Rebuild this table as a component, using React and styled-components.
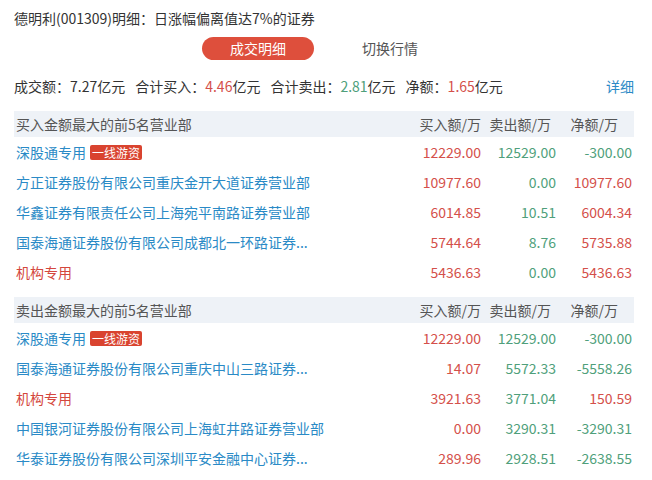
import React from "react";
import styled, { createGlobalStyle } from "styled-components";

const Global = createGlobalStyle`
  html, body { margin: 0; padding: 0; background: #fff; }
  body { font-family: "Noto Sans CJK SC", "Noto Sans", sans-serif; color: #333; }
`;

const Page = styled.div`
  width: 620px;
  padding: 8px 18px 0 14px;
  font-size: 14px;
`;

const Title = styled.div`
  line-height: 20px;
  color: #333;
`;

const Tabs = styled.div`
  display: flex;
  justify-content: center;
  gap: 20px;
  margin-top: 9px;
`;

const Tab = styled.div`
  width: 112px;
  height: 23px;
  line-height: 23px;
  text-align: center;
  border-radius: 12px;
  background: ${(p) => (p.$active ? "#de4f3c" : "transparent")};
  color: ${(p) => (p.$active ? "#fff" : "#555")};
`;

const Summary = styled.div`
  display: flex;
  align-items: center;
  margin-top: 16px;
  line-height: 20px;
`;

const Stat = styled.span`
  margin-right: 10px;
  color: #333;
`;

const Num = styled.span`
  color: ${(p) => p.$c || "#333"};
`;

const More = styled.span`
  margin-left: auto;
  color: #2a8ac6;
`;

const Section = styled.div`
  margin-top: ${(p) => p.$mt}px;
`;

const Grid = styled.div`
  display: grid;
  grid-template-columns: 1fr 75px 75px 76px 2px;
  align-items: center;
`;

const HeadRow = styled(Grid)`
  height: 26px;
  background: #eef2f7;
  color: #555;
`;

const HeadCell = styled.div`
  text-align: ${(p) => (p.$left ? "left" : "right")};
  padding-right: ${(p) => p.$pr || 0}px;
  padding-left: ${(p) => (p.$left ? 2 : 0)}px;
  white-space: nowrap;
`;

const Row = styled(Grid)`
  height: 30px;
`;

const NameCell = styled.div`
  display: flex;
  align-items: center;
  gap: 4px;
  padding-left: 2px;
  color: ${(p) => (p.$org ? "#d4473d" : "#2a8ac6")};
  white-space: nowrap;
  overflow: hidden;
`;

const Badge = styled.span`
  background: #d9432f;
  color: #fff;
  font-size: 12px;
  line-height: 15px;
  padding: 0 2px;
  border-radius: 2px;
`;

const Cell = styled.div`
  text-align: right;
  color: ${(p) => p.$c};
  white-space: nowrap;
`;

const RED = "#d4504a";
const GREEN = "#4f9f7b";
const col = (v) => (v.startsWith("-") ? GREEN : RED);

const buyRows = [
  { name: "深股通专用", badge: true, b: "12229.00", s: "12529.00", n: "-300.00" },
  { name: "方正证券股份有限公司重庆金开大道证券营业部", b: "10977.60", s: "0.00", n: "10977.60" },
  { name: "华鑫证券有限责任公司上海宛平南路证券营业部", b: "6014.85", s: "10.51", n: "6004.34" },
  { name: "国泰海通证券股份有限公司成都北一环路证券...", b: "5744.64", s: "8.76", n: "5735.88" },
  { name: "机构专用", org: true, b: "5436.63", s: "0.00", n: "5436.63" },
];

const sellRows = [
  { name: "深股通专用", badge: true, b: "12229.00", s: "12529.00", n: "-300.00" },
  { name: "国泰海通证券股份有限公司重庆中山三路证券...", b: "14.07", s: "5572.33", n: "-5558.26" },
  { name: "机构专用", org: true, b: "3921.63", s: "3771.04", n: "150.59" },
  { name: "中国银河证券股份有限公司上海虹井路证券营业部", b: "0.00", s: "3290.31", n: "-3290.31" },
  { name: "华泰证券股份有限公司深圳平安金融中心证券...", b: "289.96", s: "2928.51", n: "-2638.55" },
];

function Table({ title, rows, mt }) {
  return (
    <Section $mt={mt}>
      <HeadRow>
        <HeadCell $left>{title}</HeadCell>
        <HeadCell>买入额/万</HeadCell>
        <HeadCell $pr={5}>卖出额/万</HeadCell>
        <HeadCell $pr={14}>净额/万</HeadCell>
        <span />
      </HeadRow>
      {rows.map((r, i) => (
        <Row key={i}>
          <NameCell $org={r.org}>
            {r.name}
            {r.badge && <Badge>一线游资</Badge>}
          </NameCell>
          <Cell $c={RED}>{r.b}</Cell>
          <Cell $c={GREEN}>{r.s}</Cell>
          <Cell $c={col(r.n)}>{r.n}</Cell>
          <span />
        </Row>
      ))}
    </Section>
  );
}

export default function App() {
  return (
    <>
      <Global />
      <Page>
        <Title>德明利(001309)明细：日涨幅偏离值达7%的证券</Title>
        <Tabs>
          <Tab $active>成交明细</Tab>
          <Tab>切换行情</Tab>
        </Tabs>
        <Summary>
          <Stat>成交额：7.27亿元</Stat>
          <Stat>合计买入：<Num $c={RED}>4.46</Num>亿元</Stat>
          <Stat>合计卖出：<Num $c={GREEN}>2.81</Num>亿元</Stat>
          <Stat>净额：<Num $c={RED}>1.65</Num>亿元</Stat>
          <More>详细</More>
        </Summary>
        <Table title="买入金额最大的前5名营业部" rows={buyRows} mt={15} />
        <Table title="卖出金额最大的前5名营业部" rows={sellRows} mt={10} />
      </Page>
    </>
  );
}
